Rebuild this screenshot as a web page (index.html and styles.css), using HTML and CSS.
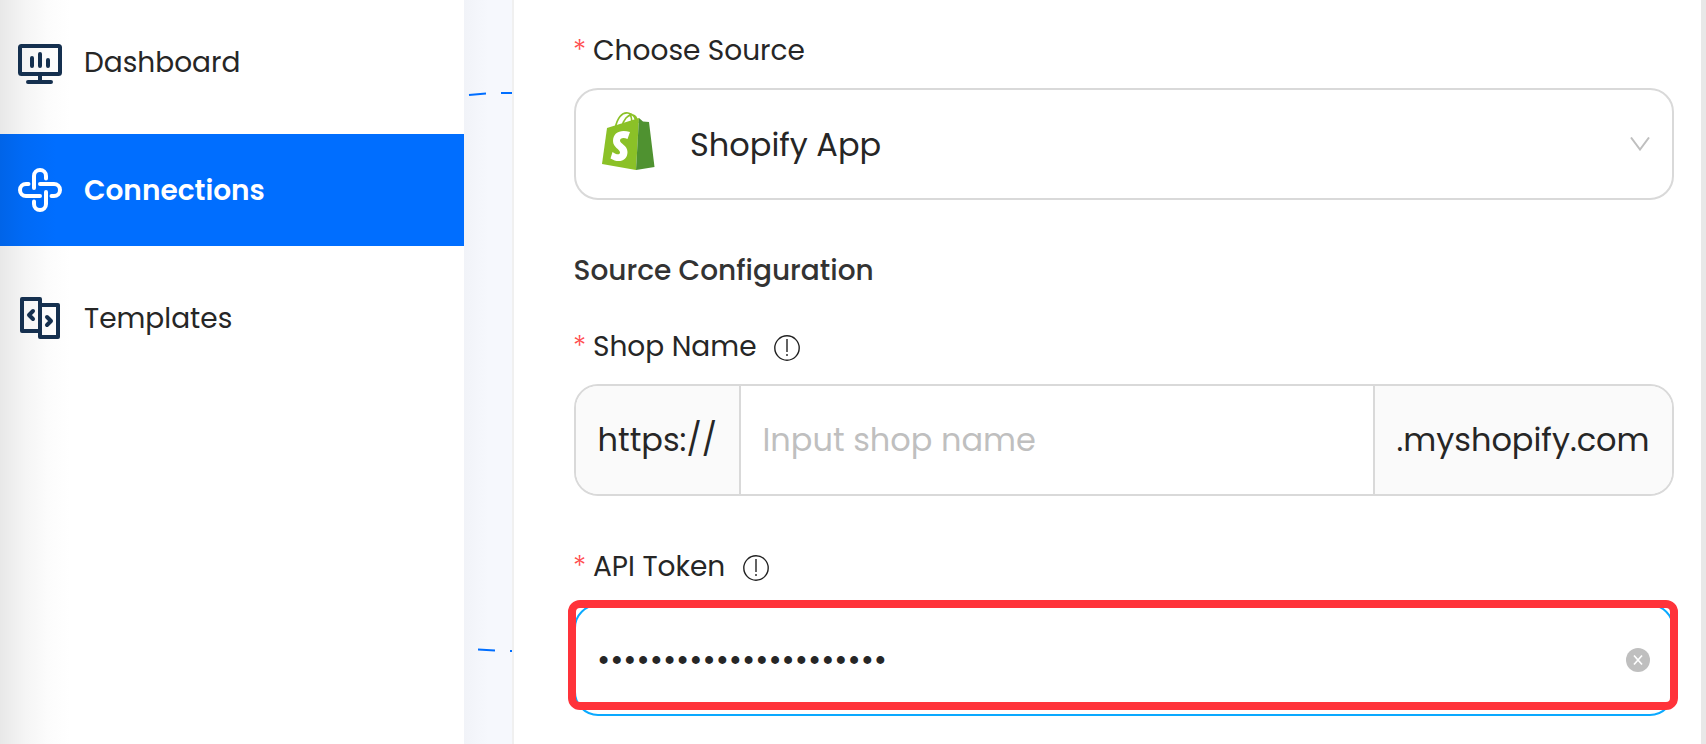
FILE: index.html
```html
<!DOCTYPE html>
<html lang="en">
<head>
<meta charset="utf-8">
<title>Connections</title>
<link rel="stylesheet" href="styles.css">
</head>
<body>
<div class="app">
  <nav class="sidebar">
    <a class="item">
      <svg class="nav-icon" viewBox="0 0 48 48" fill="none" stroke="#15304f" stroke-width="4" stroke-linecap="round" stroke-linejoin="round"><rect x="4" y="8" width="40" height="28" rx="1.5"/><path d="M24 37v6M12 44h23" /><path d="M16 20v8M24 16v12M32 22v6"/></svg>
      <span>Dashboard</span>
    </a>
    <a class="item active">
      <svg class="nav-icon" viewBox="0 0 48 48" fill="none" stroke="#fff" stroke-width="4" stroke-linecap="round" stroke-linejoin="round"><path d="M18 22V10a6 6 0 0 1 12 0v2.500"/><path d="M24 18h14a6 6 0 0 1 0 12h-2.500"/><path d="M30 26v12a6 6 0 0 1-12 0v-2.500"/><path d="M24 30H10a6 6 0 0 1 0-12h2.500"/></svg>
      <span>Connections</span>
    </a>
    <a class="item">
      <svg class="nav-icon" viewBox="0 0 48 48" fill="none" stroke="#15304f" stroke-width="4" stroke-linejoin="round"><path d="M24 37H6V5h18v32"/><rect x="24" y="11" width="18" height="32"/><path d="M17 17l-4 4 4 4M31 23l4 4-4 4" stroke-linecap="round"/></svg>
      <span>Templates</span>
    </a>
  </nav>
  <div class="canvas">
    <svg width="48" height="744" viewBox="0 0 48 744" fill="none" stroke="#006eff" stroke-width="2"><path d="M5 95l17-1.500M37 93h11M14 649.500l17 1M46 651h2"/></svg>
  </div>
  <main class="panel">
    <div class="label"><i>*</i><span>Choose Source</span></div>
    <div class="field select">
      <svg class="bag" viewBox="0 0 54 62"><path d="M13 19C15 8 20 2 26 3c6 1 8 6 8 11M20 17c1-7 6-13 11-12 4 1 4 5 5 8M27 3c3 3 3 7 3 12" fill="none" stroke="#8bc127" stroke-width="1.700"/><path d="M5 18L37 8l-3 52L0 54z" fill="#8bc127"/><path d="M37 8l4 3.500 6 .5 5.500 45-18.500 3z" fill="#4f9230"/><path d="M28 22l-2.500 7c-4-1.800-7.500-1-7.500 1.500 0 3.500 7.500 4.500 7.500 11.500 0 9-9 11.500-17 6.500l2-6.500c4 3 7.500 3 7.500.5 0-3.500-7-5-7-11.500 0-9 8-12 17-9z" fill="#fff"/></svg>
      <span>Shopify App</span>
      <svg class="chevron" viewBox="0 0 20 14" fill="none" stroke="#bfbfbf" stroke-width="2"><path d="M1 .5l9 12 9-12"/></svg>
    </div>
    <h2>Source Configuration</h2>
    <div class="label second"><i>*</i><span>Shop Name</span><svg class="info" viewBox="0 0 26 26" fill="none" stroke="#222" stroke-width="1.400"><circle cx="13" cy="13" r="12.200"/><path d="M13 4v13M13 19v2"/></svg></div>
    <div class="field group">
      <div class="prefix"><span>https://</span></div>
      <div class="input"><span>Input shop name</span></div>
      <div class="suffix"><span>.myshopify.com</span></div>
    </div>
    <div class="label third"><i>*</i><span>API Token</span><svg class="info" viewBox="0 0 26 26" fill="none" stroke="#222" stroke-width="1.400"><circle cx="13" cy="13" r="12.200"/><path d="M13 4v13M13 19v2"/></svg></div>
    <div class="field token">
      <span class="dots">••••••••••••••••••••••</span>
      <svg class="clear" viewBox="0 0 24 24"><circle cx="12" cy="12" r="12" fill="#bfbfbf"/><path d="M8 7.500l8 9M16 7.500l-8 9" stroke="#fff" stroke-width="1.700"/></svg>
      <div class="highlight"></div>
    </div>
  </main>
  <div class="edge"></div>
</div>
</body>
</html>
```
FILE: styles.css
```css
* { box-sizing: border-box; }
body { margin: 0; background: #fff; font-family: Poppins, Inter, "Open Sans", sans-serif; font-size: 28px; color: #262626; overflow: hidden; }
.app { display: flex; height: 744px; overflow: hidden; }
.sidebar { width: 464px; flex: none; padding-top: 6px; display: flex; flex-direction: column; gap: 16px; background: linear-gradient(90deg, #e8e8e8, #f5f5f5 26px, #fcfcfc 48px, #fff 70px); }
.item { height: 112px; display: flex; align-items: center; padding-left: 16px; gap: 20px; white-space: nowrap; }
.item span { padding-top: 2px; }
.item.active { background: linear-gradient(90deg, #0064e8, #006af6 24px, #006eff 56px); color: #fff; font-weight: 600; }
.nav-icon { width: 48px; height: 48px; flex: none; }
.canvas { width: 48px; flex: none; background: linear-gradient(90deg, #f1f3f8, #f6f8fd 50%); }
.canvas svg { display: block; }
.panel { width: 1189px; flex: none; border-left: 2px solid #f0f0f0; padding: 28px 27px 0 60px; }
.edge { flex: 1; background: #e8e8e8; }
.label { height: 44px; margin-bottom: 16px; display: flex; align-items: center; white-space: nowrap; }
.label span { padding-top: 2px; }
.label i { width: 20px; margin-left: -1px; font-style: normal; font-weight: 300; font-size: 28px; line-height: 44px; padding-top: 2px; color: #ff4d4f; }
.label.second { margin-top: 32px; }
.label.third { margin-top: 48px; }
.info { width: 26px; height: 26px; margin: 4px 0 0 17.5px; }
.field { width: 1100px; height: 112px; border: 2px solid #d9d9d9; border-radius: 24px; display: flex; align-items: center; font-size: 32px; white-space: nowrap; }
.select { padding: 0 22px 0 26px; }
.select span { padding-top: 2px; }
.bag { width: 54px; height: 62px; margin: -6px 34px 0 0; }
.chevron { width: 20px; height: 14px; margin-left: auto; }
h2 { height: 44px; line-height: 46px; margin: 48px 0 0 -0.5px; font-size: 28px; font-weight: 500; color: #333; }
.group { overflow: hidden; align-items: stretch; }
.group > div { display: flex; align-items: center; }
.prefix { width: 165px; padding-left: 21.5px; background: #fafafa; border-right: 2px solid #d9d9d9; }
.input { flex: 1; padding-left: 21.5px; color: #bfbfbf; }
.suffix { width: 299px; padding-left: 21.5px; background: #fafafa; border-left: 2px solid #d9d9d9; }
.token { position: relative; border-color: #0aa9ff; padding: 0 22px 0 21px; }
.dots { font-size: 32px; }
.clear { width: 24px; height: 24px; margin-left: auto; }
.highlight { position: absolute; left: -8px; top: -6px; width: 1110px; height: 110px; border: 8px solid #ff333a; border-radius: 12px; }
```
